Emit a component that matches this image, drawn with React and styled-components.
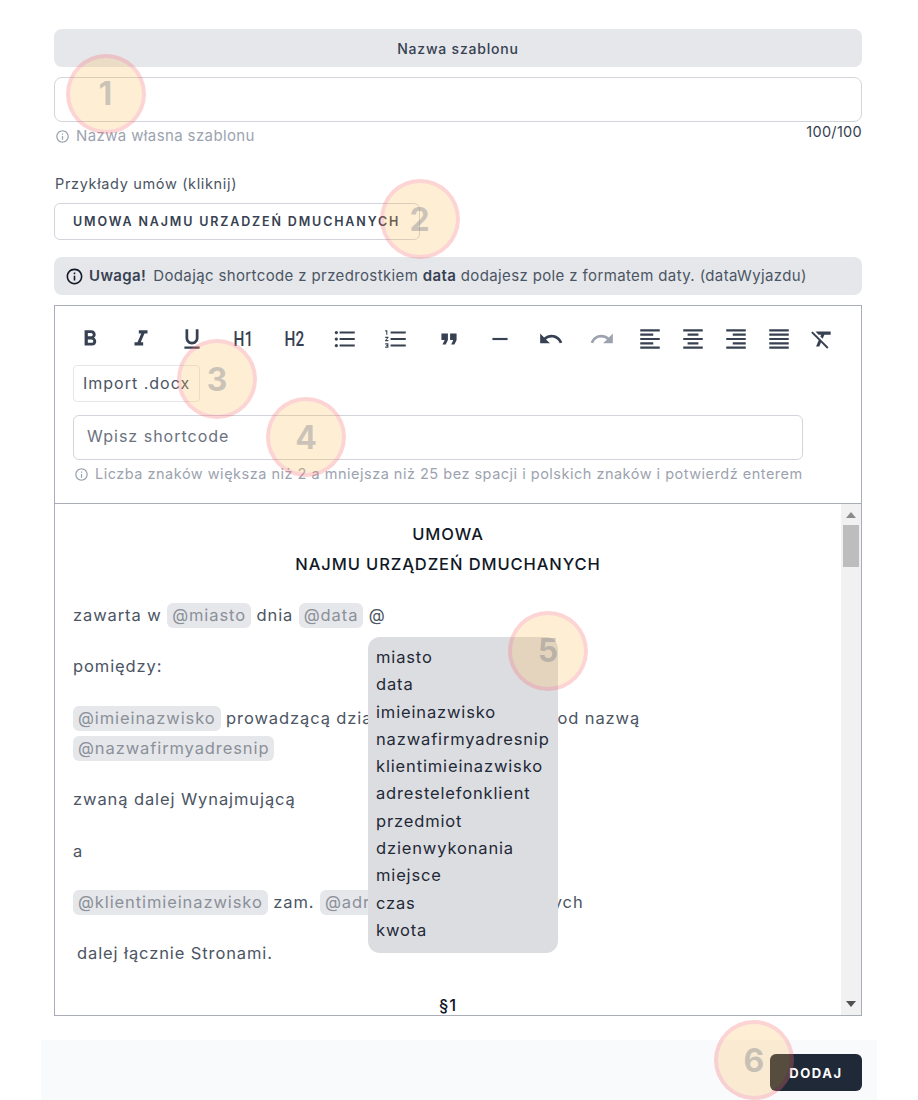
import React from "react";
import styled, { createGlobalStyle } from "styled-components";
import {
  MdFormatBold,
  MdFormatItalic,
  MdFormatUnderlined,
  MdFormatListBulleted,
  MdFormatListNumbered,
  MdFormatQuote,
  MdRemove,
  MdUndo,
  MdRedo,
  MdFormatAlignLeft,
  MdFormatAlignCenter,
  MdFormatAlignRight,
  MdFormatAlignJustify,
  MdFormatClear,
} from "react-icons/md";
import { RiInformationLine } from "react-icons/ri";

const formatTools = [
  MdFormatBold,
  MdFormatItalic,
  MdFormatUnderlined,
  "H1",
  "H2",
  MdFormatListBulleted,
  MdFormatListNumbered,
];
const historyTools = [MdFormatQuote, MdRemove, MdUndo];
const alignTools = [
  MdFormatAlignLeft,
  MdFormatAlignCenter,
  MdFormatAlignRight,
  MdFormatAlignJustify,
  MdFormatClear,
];

const shortcodes = [
  "miasto",
  "data",
  "imieinazwisko",
  "nazwafirmyadresnip",
  "klientimieinazwisko",
  "adrestelefonklient",
  "przedmiot",
  "dzienwykonania",
  "miejsce",
  "czas",
  "kwota",
];

const markers = [
  { n: 1, x: 105.5, y: 93.5 },
  { n: 2, x: 419.5, y: 219 },
  { n: 3, x: 217, y: 379 },
  { n: 4, x: 306, y: 437 },
  { n: 5, x: 548, y: 650.5 },
  { n: 6, x: 754, y: 1060 },
];

const App = () => {
  return (
    <>
      <GlobalStyle />
      <Page>
        <Heading>Nazwa szablonu</Heading>
        <NameInput type="text" />
        <HintRow>
          <Hint>
            <RiInformationLine size={15} />
            Nazwa własna szablonu
          </Hint>
          <Counter>100/100</Counter>
        </HintRow>

        <Label>Przykłady umów (kliknij)</Label>
        <ExampleButton>UMOWA NAJMU URZADZEŃ DMUCHANYCH</ExampleButton>

        <Alert>
          <RiInformationLine size={19} color="#111827" />
          <strong>Uwaga!</strong>
          <span>
            Dodając shortcode z przedrostkiem <b>data</b> dodajesz pole z formatem daty. (dataWyjazdu)
          </span>
        </Alert>

        <Editor>
          <Toolbar>
            <Tools>
              <ToolGroup>
                {formatTools.map((Icon, i) => (
                  <Tool key={i}>
                    {typeof Icon === "string" ? <HeadingTool>{Icon}</HeadingTool> : <Icon size={26} />}
                  </Tool>
                ))}
              </ToolGroup>
              <HistoryGroup>
                {historyTools.map((Icon, i) => (
                  <Tool key={i}>
                    <Icon size={26} />
                  </Tool>
                ))}
                <Tool $faded>
                  <MdRedo size={26} />
                </Tool>
              </HistoryGroup>
              <AlignGroup>
                {alignTools.map((Icon, i) => (
                  <Tool key={i}>
                    <Icon size={26} />
                  </Tool>
                ))}
              </AlignGroup>
            </Tools>
            <ImportButton>Import .docx</ImportButton>
            <ShortcodeInput type="text" placeholder="Wpisz shortcode" />
            <ShortcodeHint>
              <RiInformationLine size={15} />
              Liczba znaków większa niż 2 a mniejsza niż 25 bez spacji i polskich znaków i potwierdź enterem
            </ShortcodeHint>
          </Toolbar>

          <EditorBody>
            <Content>
              <Title>UMOWA</Title>
              <Title $last>NAJMU URZĄDZEŃ DMUCHANYCH</Title>
              <Para>
                zawarta w <Chip>@miasto</Chip> dnia <Chip>@data</Chip> @
              </Para>
              <Para>pomiędzy:</Para>
              <Para>
                <Chip>@imieinazwisko</Chip> prowadzącą działalność <Tight>gospodarczą</Tight> pod nazwą{" "}
                <Chip>@nazwafirmyadresnip</Chip>
              </Para>
              <Para>zwaną dalej Wynajmującą</Para>
              <Para>a</Para>
              <Para>
                <Chip>@klientimieinazwisko</Chip> zam. <Chip>@adrestelefonklient</Chip> zwanych
              </Para>
              <Para $indent>dalej łącznie Stronami.</Para>
              <Title>§1</Title>
            </Content>
            <Suggestions>
              {shortcodes.map((code) => (
                <li key={code}>{code}</li>
              ))}
            </Suggestions>
            <Scrollbar>
              <ArrowUp />
              <Thumb />
              <ArrowDown />
            </Scrollbar>
          </EditorBody>
        </Editor>

        <Footer>
          <SubmitButton>DODAJ</SubmitButton>
        </Footer>

        {markers.map((m) => (
          <Marker key={m.n} style={{ left: m.x - 40, top: m.y - 40 }}>
            {m.n}
          </Marker>
        ))}
      </Page>
    </>
  );
};

const GlobalStyle = createGlobalStyle`
  * {
    box-sizing: border-box;
  }
  body {
    margin: 0;
    background: #fff;
    font-family: Inter, "Liberation Sans", sans-serif;
    color: #4b5563;
  }
`;

const Page = styled.div`
  position: relative;
  width: 918px;
  height: 1100px;
  overflow: hidden;
  padding: 29px 56px 0 54px;
`;

const Heading = styled.div`
  height: 38px;
  border-radius: 8px;
  background: #e5e7eb;
  display: flex;
  align-items: center;
  justify-content: center;
  font-size: 14px;
  font-weight: 500;
  letter-spacing: 0.8px;
  color: #374151;
`;

const NameInput = styled.input`
  display: block;
  width: 100%;
  height: 45px;
  margin-top: 10px;
  border: 1px solid #d1d5db;
  border-radius: 8px;
  outline: none;
  background: #fff;
`;

const HintRow = styled.div`
  display: flex;
  justify-content: space-between;
  align-items: flex-start;
  height: 52px;
`;

const Hint = styled.div`
  display: flex;
  align-items: center;
  gap: 6px;
  padding: 4px 0 0 1px;
  line-height: 20px;
  font-size: 15px;
  letter-spacing: 0.38px;
  color: #9ca3af;
`;

const Counter = styled.div`
  font-size: 14.5px;
  line-height: 20px;
  letter-spacing: 0.3px;
  color: #374151;
`;

const Label = styled.div`
  padding-left: 1px;
  font-size: 14.5px;
  line-height: 20px;
  letter-spacing: 0.65px;
  color: #4b5563;
`;

const ExampleButton = styled.button`
  display: block;
  width: 366px;
  height: 37px;
  margin-top: 9px;
  padding: 0 0 1px 18px;
  border: 1px solid #d1d5db;
  border-radius: 6px;
  background: #fff;
  text-align: left;
  white-space: nowrap;
  font-family: inherit;
  font-size: 12.5px;
  font-weight: 600;
  letter-spacing: 1.85px;
  color: #374151;
`;

const Alert = styled.div`
  display: flex;
  align-items: center;
  height: 38px;
  margin-top: 17px;
  padding: 0 0 2px 11px;
  border-radius: 8px;
  background: #e5e7eb;
  font-size: 15px;
  letter-spacing: 0.37px;
  white-space: nowrap;
  color: #4b5563;

  svg {
    margin-top: 2px;
  }
  strong {
    margin: 0 7px 0 5px;
    font-weight: 600;
    color: #374151;
  }
  b {
    font-weight: 600;
    color: #374151;
  }
`;

const Editor = styled.div`
  height: 711px;
  margin-top: 10px;
  border: 1px solid #a8adb8;
  display: flex;
  flex-direction: column;
`;

const Toolbar = styled.div`
  height: 198px;
  flex: none;
  padding: 21px 18px 0;
  border-bottom: 1px solid #a8adb8;
`;

const Tools = styled.div`
  display: flex;
  height: 24px;
  margin-left: 4px;
`;

const ToolGroup = styled.div`
  display: flex;
  gap: 25px;
`;

const HistoryGroup = styled(ToolGroup)`
  margin-left: 27px;
`;

const AlignGroup = styled.div`
  display: flex;
  gap: 17px;
  margin-left: 22px;
`;

const Tool = styled.span`
  display: flex;
  align-items: center;
  justify-content: center;
  width: 26px;
  height: 24px;
  color: ${(p) => (p.$faded ? "#9ca3af" : "#374151")};
`;

const HeadingTool = styled.span`
  font-family: Roboto, sans-serif;
  font-size: 21px;
  line-height: 1;
  font-weight: 500;
  transform: scaleX(0.73);
`;

const ImportButton = styled.button`
  display: block;
  width: 127px;
  height: 37px;
  margin-top: 14px;
  padding: 0 0 2px 9px;
  border: 1px solid #e5e7eb;
  border-radius: 4px;
  background: #fff;
  text-align: left;
  white-space: nowrap;
  font-family: inherit;
  font-size: 16px;
  letter-spacing: 1px;
  color: #4b5563;
`;

const ShortcodeInput = styled.input`
  display: block;
  width: 730px;
  height: 45px;
  margin-top: 13px;
  padding: 0 13px 3px;
  border: 1px solid #d1d5db;
  border-radius: 6px;
  outline: none;
  font-family: inherit;
  font-size: 16px;
  letter-spacing: 1px;

  &::placeholder {
    color: #6b7280;
    opacity: 1;
  }
`;

const ShortcodeHint = styled.div`
  display: flex;
  align-items: center;
  gap: 6px;
  margin-top: 4px;
  padding-left: 1px;
  line-height: 20px;
  white-space: nowrap;
  font-size: 14.5px;
  letter-spacing: 0.5px;
  color: #9ca3af;
`;

const EditorBody = styled.div`
  position: relative;
  flex: 1;
  min-height: 0;
  display: flex;
  overflow: hidden;
`;

const Content = styled.div`
  flex: 1;
  min-width: 0;
  padding: 15px 18px 0;
  font-size: 16.5px;
  line-height: 30px;
  letter-spacing: 0.9px;
  color: #4b5563;
`;

const Title = styled.div`
  text-align: center;
  font-weight: 500;
  color: #111827;
  margin-bottom: ${(p) => (p.$last ? "21px" : "0")};
`;

const Para = styled.p`
  margin: 0 0 21.4px;
  padding-left: ${(p) => (p.$indent ? "4px" : "0")};
`;

const Tight = styled.span`
  letter-spacing: 0;
`;

const Chip = styled.span`
  display: inline-block;
  height: 25px;
  line-height: 25px;
  padding: 0 5px;
  border-radius: 6px;
  background: #e5e7eb;
  color: #8b9099;
`;

const Suggestions = styled.ul`
  position: absolute;
  left: 313px;
  top: 133px;
  width: 190px;
  height: 316px;
  margin: 0;
  padding: 7px 8px;
  list-style: none;
  border-radius: 12px;
  background: #dcdde1;
  font-size: 16.5px;
  letter-spacing: 0.85px;
  color: #1f2937;

  li {
    height: 27.3px;
    line-height: 27.3px;
    white-space: nowrap;
  }
`;

const Scrollbar = styled.div`
  flex: none;
  width: 20px;
  position: relative;
  background: #f1f1f1;
`;

const ArrowUp = styled.div`
  position: absolute;
  left: 5px;
  top: 8px;
  border-left: 5px solid transparent;
  border-right: 5px solid transparent;
  border-bottom: 6px solid #8a8a8a;
`;

const ArrowDown = styled.div`
  position: absolute;
  left: 5px;
  bottom: 8px;
  border-left: 5px solid transparent;
  border-right: 5px solid transparent;
  border-top: 6px solid #505050;
`;

const Thumb = styled.div`
  position: absolute;
  left: 2px;
  top: 21px;
  width: 16px;
  height: 42px;
  background: #bdbdbd;
`;

const Footer = styled.div`
  display: flex;
  justify-content: flex-end;
  align-items: flex-start;
  height: 61px;
  margin: 24px -15px 0 -13px;
  padding: 14px 15px 0 0;
  background: #f9fafb;
`;

const SubmitButton = styled.button`
  width: 92px;
  height: 37px;
  border: none;
  border-radius: 6px;
  background: #1f2937;
  font-family: inherit;
  font-size: 13px;
  font-weight: 700;
  letter-spacing: 1.6px;
  color: #fff;
`;

const Marker = styled.div`
  position: absolute;
  width: 80px;
  height: 80px;
  border-radius: 50%;
  border: 4px solid rgba(248, 113, 113, 0.3);
  background: rgba(251, 187, 83, 0.25);
  background-clip: padding-box;
  display: flex;
  align-items: center;
  justify-content: center;
  font-size: 32px;
  font-weight: 700;
  color: rgba(107, 114, 128, 0.35);
  pointer-events: none;
`;

export default App;
